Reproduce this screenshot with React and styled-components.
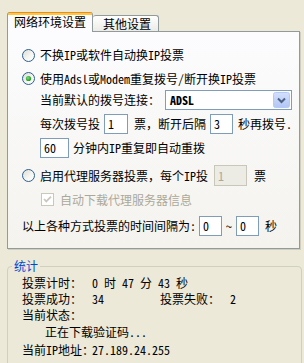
import React from "react";
import styled, { createGlobalStyle } from "styled-components";

const Global = createGlobalStyle`
  html, body { margin: 0; padding: 0; background: #ECE9D8; }
  body {
    font-family: "Noto Sans Mono CJK SC", "Noto Sans CJK SC", sans-serif;
    font-size: 12px;
    color: #000;
  }
`;

const Window = styled.div`
  width: 304px;
  height: 363px;
  overflow: hidden;
  box-sizing: border-box;
  padding-left: 7px;
  display: flex;
  flex-direction: column;
  background: #ECE9D8;
`;

const TabStrip = styled.div`
  display: flex;
  align-items: flex-end;
  height: 31px;
  box-sizing: border-box;
  padding-top: 12px;
  position: relative;
  z-index: 1;
`;

const Tab = styled.div`
  box-sizing: border-box;
  height: ${(p) => (p.$active ? 20 : 16)}px;
  margin-bottom: ${(p) => (p.$active ? -1 : 0)}px;
  padding: ${(p) => (p.$active ? "0 6px 0 6px" : "0 7px 0 10px")};
  border: 1px solid #919B9C;
  border-bottom: none;
  border-top: ${(p) => (p.$active ? "none" : "1px solid #919B9C")};
  border-left: ${(p) => (p.$active ? "1px solid #919B9C" : "none")};
  border-radius: 3px 3px 0 0;
  background: ${(p) =>
    p.$active
      ? "linear-gradient(#E68B2C 0 1px, #FFC83C 1px 3px, #FCFCFE 3px)"
      : "linear-gradient(#FFFFFF, #ECEBE6)"};
  display: flex;
  align-items: center;
  line-height: 14px;
  white-space: nowrap;
`;

const Panel = styled.div`
  box-sizing: border-box;
  width: 293px;
  height: 218px;
  flex: none;
  border: 1px solid #919B9C;
  background: linear-gradient(#FCFCFE, #F4F3EE);
  box-shadow: 1px 1px 0 #D0CEBF;
  padding: 13px 0 0 14px;
  display: flex;
  flex-direction: column;
`;

const Row = styled.div`
  display: flex;
  align-items: center;
  flex: none;
  height: ${(p) => p.$h || 20}px;
  margin-top: ${(p) => p.$mt || 0}px;
  margin-left: ${(p) => p.$indent || 0}px;
  white-space: nowrap;
  line-height: 14px;
`;

const Text = styled.span`
  flex: none;
  margin-left: ${(p) => p.$ml || 0}px;
  color: ${(p) => (p.$disabled ? "#ACA899" : "#000")};
`;

const Glyph = styled.span`
  display: flex;
  flex: none;
  margin-left: ${(p) => p.$ml || 0}px;
`;

const Edit = styled.div`
  box-sizing: border-box;
  flex: none;
  width: ${(p) => p.$w}px;
  height: ${(p) => p.$h || 20}px;
  margin-left: ${(p) => p.$ml || 0}px;
  border: 1px solid ${(p) => (p.$disabled ? "#C9C7BA" : "#7F9DB9")};
  background: ${(p) => (p.$disabled ? "#EDECE4" : "#FFFFFF")};
  color: ${(p) => (p.$disabled ? "#ACA899" : "#000")};
  padding-left: 3px;
  display: flex;
  align-items: center;
`;

const Combo = styled.div`
  box-sizing: border-box;
  flex: none;
  width: ${(p) => p.$w}px;
  height: 20px;
  margin-left: ${(p) => p.$ml || 0}px;
  border: 1px solid #7F9DB9;
  background: #FFFFFF;
  padding: 0 1px 0 4px;
  display: flex;
  align-items: center;
  justify-content: space-between;
`;

const ComboText = styled.span`
  font-weight: bold;
`;

const Group = styled.fieldset`
  box-sizing: border-box;
  margin: 10px 0 0 0;
  width: 295px;
  height: 130px;
  flex: none;
  padding: 0 0 0 4px;
  border: 1px solid #D0D0BF;
  border-radius: 4px;
`;

const Legend = styled.legend`
  padding: 0 2px;
  color: #0046D5;
  line-height: 14px;
`;

const Stats = styled.div`
  display: flex;
  flex-direction: column;
  padding-left: 10px;
  margin-top: 2px;
`;

const StatRow = styled.div`
  display: flex;
  align-items: center;
  height: 16px;
  line-height: 14px;
  margin-top: ${(p) => p.$mt || 0}px;
  padding-left: ${(p) => p.$indent || 0}px;
  white-space: nowrap;
`;

const Cell = styled.span`
  flex: none;
  width: ${(p) => (p.$w ? p.$w + "px" : "auto")};
`;

const Radio = ({ checked, ml }) => (
  <Glyph $ml={ml}>
    <svg width="13" height="13" viewBox="0 0 13 13">
      <defs>
        <linearGradient id="rb" x1="0" y1="0" x2="1" y2="1">
          <stop offset="0" stopColor="#DCDBD3" />
          <stop offset="0.6" stopColor="#F7F7F4" />
          <stop offset="1" stopColor="#FFFFFF" />
        </linearGradient>
        <radialGradient id="rd" cx="0.4" cy="0.4" r="0.6">
          <stop offset="0" stopColor="#7BE07B" />
          <stop offset="1" stopColor="#1E9A1E" />
        </radialGradient>
      </defs>
      <circle cx="6.5" cy="6.5" r="6" fill="url(#rb)" stroke="#2C5F91" strokeWidth="1" />
      {checked && <circle cx="6.5" cy="6.5" r="2.6" fill="url(#rd)" />}
    </svg>
  </Glyph>
);

const Check = ({ ml }) => (
  <Glyph $ml={ml}>
    <svg width="13" height="13" viewBox="0 0 13 13">
      <rect x="0.5" y="0.5" width="12" height="12" fill="#FFFFFF" stroke="#CAC8BB" />
      <path d="M3 6 L5.3 8.4 L10 3.7" fill="none" stroke="#CAC8BB" strokeWidth="1.8" />
    </svg>
  </Glyph>
);

const ComboButton = () => (
  <Glyph>
    <svg width="17" height="16" viewBox="0 0 17 16">
      <defs>
        <linearGradient id="cb" x1="0" y1="0" x2="0" y2="1">
          <stop offset="0" stopColor="#D3E0FD" />
          <stop offset="1" stopColor="#B2C6F5" />
        </linearGradient>
      </defs>
      <rect x="0.5" y="0.5" width="16" height="15" rx="2" fill="url(#cb)" stroke="#B7C9F2" />
      <path d="M5 6.5 L8.5 10 L12 6.5" fill="none" stroke="#4D6185" strokeWidth="2" />
    </svg>
  </Glyph>
);

export default function App() {
  return (
    <>
      <Global />
      <Window>
        <TabStrip>
          <Tab $active>网络环境设置</Tab>
          <Tab>其他设置</Tab>
        </TabStrip>
        <Panel>
          <Row>
            <Radio />
            <Text $ml={5}>不换IP或软件自动换IP投票</Text>
          </Row>
          <Row $mt={3} $h={21}>
            <Radio checked />
            <Text $ml={5}>使用Adsl或Modem重复拨号/断开换IP投票</Text>
          </Row>
          <Row $mt={1} $indent={18}>
            <Text>当前默认的拨号连接：</Text>
            <Combo $ml={5} $w={127}>
              <ComboText>ADSL</ComboText>
              <ComboButton />
            </Combo>
          </Row>
          <Row $mt={4} $indent={18}>
            <Text>每次拨号投</Text>
            <Edit $ml={4} $w={24}>1</Edit>
            <Text $ml={6}>票，断开后隔</Text>
            <Edit $ml={4} $w={23}>3</Edit>
            <Text $ml={5}>秒再拨号.</Text>
          </Row>
          <Row $mt={4} $indent={18}>
            <Edit $w={29}>60</Edit>
            <Text $ml={4}>分钟内IP重复即自动重拨</Text>
          </Row>
          <Row $mt={7} $h={21}>
            <Radio />
            <Text $ml={5}>启用代理服务器投票，每个IP投</Text>
            <Edit $ml={6} $w={33} $h={21} $disabled>1</Edit>
            <Text $ml={7}>票</Text>
          </Row>
          <Row $mt={4} $h={19} $indent={19}>
            <Check />
            <Text $ml={6} $disabled>自动下载代理服务器信息</Text>
          </Row>
          <Row $mt={7}>
            <Text>以上各种方式投票的时间间隔为:</Text>
            <Edit $ml={3} $w={23}>0</Edit>
            <Text $ml={4}>~</Text>
            <Edit $ml={4} $w={23}>0</Edit>
            <Text $ml={6}>秒</Text>
          </Row>
        </Panel>
        <Group>
          <Legend>统计</Legend>
          <Stats>
            <StatRow>
              <Cell $w={70}>投票计时：</Cell>
              <Cell>0 时 47 分 43 秒</Cell>
            </StatRow>
            <StatRow>
              <Cell $w={70}>投票成功：</Cell>
              <Cell $w={68}>34</Cell>
              <Cell $w={70}>投票失败：</Cell>
              <Cell>2</Cell>
            </StatRow>
            <StatRow>
              <Cell>当前状态：</Cell>
            </StatRow>
            <StatRow $mt={1} $indent={23}>
              <Cell>正在下载验证码...</Cell>
            </StatRow>
            <StatRow $mt={2}>
              <Cell $w={70}>当前IP地址：</Cell>
              <Cell>27.189.24.255</Cell>
            </StatRow>
          </Stats>
        </Group>
      </Window>
    </>
  );
}
